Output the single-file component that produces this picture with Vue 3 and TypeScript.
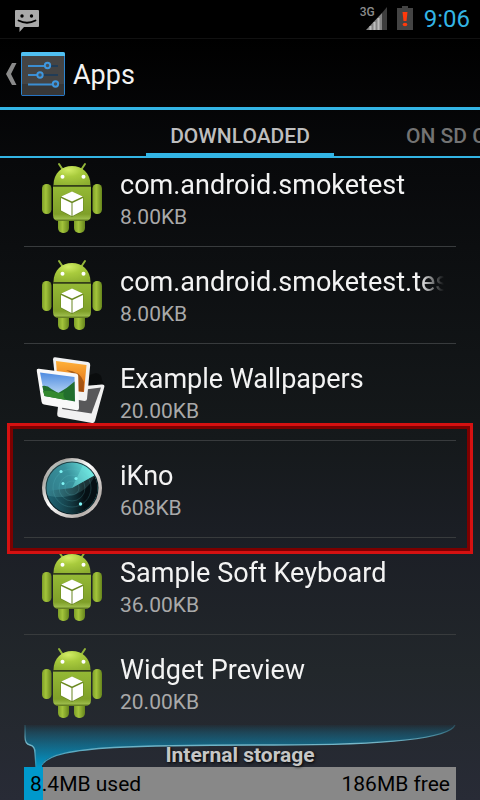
<script setup lang="ts">
type IconKind = 'robot' | 'photos' | 'radar'

interface AppEntry {
  name: string
  size: string
  icon: IconKind
  marked?: boolean
}

const apps: AppEntry[] = [
  { name: 'com.android.smoketest', size: '8.00KB', icon: 'robot' },
  { name: 'com.android.smoketest.tests', size: '8.00KB', icon: 'robot' },
  { name: 'Example Wallpapers', size: '20.00KB', icon: 'photos' },
  { name: 'iKno', size: '608KB', icon: 'radar', marked: true },
  { name: 'Sample Soft Keyboard', size: '36.00KB', icon: 'robot' },
  { name: 'Widget Preview', size: '20.00KB', icon: 'robot' },
]

const storage = { used: 8.4, free: 186 }
const usedShare = `${((storage.used / (storage.used + storage.free)) * 100).toFixed(1)}%`
</script>

<template>
  <div class="screen">
    <svg class="defs" width="0" height="0" aria-hidden="true">
      <defs>
        <linearGradient id="limb" x1="0" x2="1" y1="0" y2="0">
          <stop offset="0" stop-color="#7d9f27" />
          <stop offset=".4" stop-color="#a3c43b" />
          <stop offset="1" stop-color="#66851c" />
        </linearGradient>
        <linearGradient id="torso" x1="0" x2="0" y1="0" y2="1">
          <stop offset="0" stop-color="#94b935" />
          <stop offset=".8" stop-color="#7f9f29" />
          <stop offset=".93" stop-color="#9aba48" />
          <stop offset="1" stop-color="#587219" />
        </linearGradient>
        <radialGradient id="head" cx=".4" cy=".2" r=".9">
          <stop offset="0" stop-color="#d2ed66" />
          <stop offset=".4" stop-color="#a9cb3d" />
          <stop offset="1" stop-color="#8bad2f" />
        </radialGradient>
        <linearGradient id="sky" x1="0" x2="0" y1="0" y2="1">
          <stop offset="0" stop-color="#4e8be0" />
          <stop offset="1" stop-color="#d9edfb" />
        </linearGradient>
        <linearGradient id="sunset" x1="0" x2="0" y1="0" y2="1">
          <stop offset="0" stop-color="#ffb13a" />
          <stop offset="1" stop-color="#dd6510" />
        </linearGradient>
        <linearGradient id="rim" x1="0" x2="1" y1="0" y2="1">
          <stop offset="0" stop-color="#ffffff" />
          <stop offset=".2" stop-color="#aaa49f" />
          <stop offset=".45" stop-color="#ffffff" />
          <stop offset=".8" stop-color="#b5aeaa" />
          <stop offset="1" stop-color="#ffffff" />
        </linearGradient>
        <linearGradient id="scope" x1="10" y1="40" x2="56" y2="16" gradientUnits="userSpaceOnUse">
          <stop offset="0" stop-color="#1f6474" />
          <stop offset=".55" stop-color="#287f8c" />
          <stop offset="1" stop-color="#62e0da" />
        </linearGradient>
        <linearGradient id="scope-dark" x1="12" y1="44" x2="52" y2="42" gradientUnits="userSpaceOnUse">
          <stop offset="0" stop-color="#0a1a20" stop-opacity="0" />
          <stop offset=".9" stop-color="#061014" />
        </linearGradient>
      </defs>
    </svg>

    <div class="status">
      <svg class="talk" width="25" height="24" viewBox="0 0 25 24" aria-hidden="true">
        <path d="M1 1h22q1 0 1 1v15q0 1-1 1H9l-4.500 5V18H1q-1 0-1-1V2q0-1 1-1z" fill="#a9a9a9" />
        <circle cx="7" cy="7" r="1.700" fill="#000" />
        <circle cx="16.500" cy="7" r="1.700" fill="#000" />
        <path d="M3.500 11.500q8.500 4.500 17 0" fill="none" stroke="#000" stroke-width="1.800" stroke-linecap="round" />
      </svg>
      <div class="indicators">
        <span class="network">3G</span>
        <svg class="signal" width="22" height="24" viewBox="0 0 22 24" aria-hidden="true">
          <path d="M0 24L16 7v17z" fill="#858585" />
          <path d="M4.500 20v4M8.500 16v8M12.500 12v12" stroke="#bdbdbd" stroke-width="2" />
          <path d="M16 7l5-6v23h-5z" fill="#3d3d3d" />
        </svg>
        <svg class="battery" width="16" height="24" viewBox="0 0 16 24" aria-hidden="true">
          <path d="M5 0h6v2h5v22H0V2h5z" fill="#444" />
          <path d="M5.500 6h5l-1 9h-3z" fill="#ff3a0c" />
          <ellipse cx="8" cy="18.500" rx="2.300" ry="1.700" fill="#ff3a0c" />
        </svg>
        <time class="clock">9:06</time>
      </div>
    </div>

    <header class="header">
      <button class="up" type="button" aria-label="Back">
        <svg width="11" height="22" viewBox="0 0 11 22" aria-hidden="true">
          <path d="M6 0h4.500L5 11l5.500 11H6L0 11z" fill="#8a8a8a" />
        </svg>
        <svg width="44" height="44" viewBox="0 0 44 44" aria-hidden="true">
          <rect x=".5" y=".5" width="43" height="43" rx="1" fill="#444" stroke="#2c86d0" />
          <rect x="1" y="32" width="42" height="11" fill="#373737" />
          <path d="M0 2q0-2 2-2h40q2 0 2 2v2H0z" fill="#50c0f2" />
          <path d="M1 43.500h42" stroke="#2673c2" />
          <path d="M30 14h7M23 23h14" stroke="#163a5c" stroke-width="1.500" />
          <path d="M7 14h17M7 23h9M7 32.500h25" stroke="#3b8ed2" stroke-width="1.800" />
          <g fill="#46515a" stroke="#3e97df" stroke-width="1.900">
            <circle cx="26.500" cy="13.500" r="2.700" />
            <circle cx="19" cy="23" r="2.700" />
            <circle cx="34.500" cy="32" r="2.700" />
          </g>
        </svg>
      </button>
      <h1 class="title">Apps</h1>
    </header>

    <nav class="tabs">
      <button class="tab current" type="button">DOWNLOADED</button>
      <button class="tab next" type="button">ON SD CARD</button>
    </nav>

    <main class="viewport">
      <ul class="list">
        <li v-for="app in apps" :key="app.name" class="row" :class="{ marked: app.marked }">
          <svg v-if="app.icon === 'robot'" class="icon" viewBox="0 0 72 72" aria-hidden="true">
            <path d="M23 2l4 6M49 2l-4 6" stroke="#93b539" stroke-width="2" stroke-linecap="round" />
            <rect x="22" y="50" width="11" height="21" rx="5" fill="url(#limb)" />
            <rect x="38" y="50" width="11" height="21" rx="5" fill="url(#limb)" />
            <rect x="6" y="22" width="9.500" height="30" rx="4.500" fill="url(#limb)" />
            <rect x="56.500" y="22" width="9.500" height="30" rx="4.500" fill="url(#limb)" />
            <path d="M17 24.500h38V53q0 6-6 6H23q-6 0-6-6z" fill="url(#torso)" />
            <path d="M17.500 23C17.500 11 26 4 36 4s18.500 7 18.500 19z" fill="url(#head)" />
            <path d="M17 23.700h38" stroke="#343f18" stroke-width="1.300" />
            <circle cx="26.500" cy="14.800" r="2" fill="#fff" />
            <circle cx="47.500" cy="14.800" r="2" fill="#fff" />
            <path d="M36 29.500l11.500 5.500v14L36 55l-11.500-6V35z" fill="#526d17" opacity=".55" />
            <path d="M36 29.500L46.800 34.600 36 39.500 25.200 34.600zM25 36l10.500 5v13L25 48.500zM47 36v12.500L36.500 54V41z" fill="#fff" />
          </svg>
          <svg v-else-if="app.icon === 'photos'" class="icon" viewBox="0 0 72 72" aria-hidden="true">
            <path d="M50 20l10-3q6 1 6 7l2 4-18 2z" fill="#000" opacity=".4" />
            <path d="M24 32L66 28.500q3 0 2.300 2.500L59 65q-.8 2.500-3 2L23 61q-2-.5-1.800-3z" fill="#f1f1f1" />
            <path d="M30 36l35-4.500L55.500 57.500 26 53z" fill="#58585a" />
            <path d="M19 1.200L52 6q2.300.5 2.200 3L51 43q-.3 2-2.500 2L21 40 17 3.500q0-2.500 2-2.300z" fill="#f2f2f2" />
            <path d="M20 5l30.500 4L48 36l-26-3z" fill="url(#sunset)" />
            <path d="M30 14q14 1 18 12l-.5 10-7-1L41 20z" fill="#7a3a0c" opacity=".6" />
            <path d="M.8 15q-.6-2.500 2-2.200L40 17.500q2 .3 2.200 2.300L43 52q0 2.500-2.300 2.200L8 48.500q-2-.4-2.400-2.500z" fill="#f9f9f9" />
            <path d="M4 16.500L38.500 21l.5 24.500L8.500 40z" fill="url(#sky)" />
            <path d="M6.300 30q5-1 9 3l7 4q8-4 16.300-11.500L39 45.500 8.500 40z" fill="#226e2e" />
            <path d="M7 35q6-1 12 1t9 0q-2 4 2 8L8.500 40z" fill="#33892f" />
          </svg>
          <svg v-else class="icon" viewBox="0 0 72 72" aria-hidden="true">
            <circle cx="36" cy="35" r="30" fill="url(#rim)" />
            <circle cx="36" cy="35" r="26.500" fill="#081c22" />
            <circle cx="36" cy="35" r="25.500" fill="url(#scope)" />
            <path d="M36 35L58.300 22.600A25.500 25.500 0 1 1 10.700 38z" fill="url(#scope-dark)" />
            <path d="M36 35L58.300 22.600A25.500 25.500 0 0 0 47 12z" fill="#7af5ec" opacity=".35" />
            <path d="M10.800 42A25.500 25.500 0 1 1 58.600 23C54 34 42 44 24 44q-8 0-13.200-2z" fill="#9ff" opacity=".15" />
            <g fill="none" stroke="#62c4ca" stroke-width=".8" opacity=".25">
              <circle cx="36" cy="35" r="7" />
              <circle cx="36" cy="35" r="13" />
              <circle cx="36" cy="35" r="19" />
            </g>
            <g fill="#80f4f4">
              <circle cx="25" cy="18.500" r="1.600" />
              <circle cx="40" cy="25.500" r="1.600" />
              <circle cx="27" cy="30.500" r="1.500" />
              <circle cx="44.500" cy="51" r="1.700" />
            </g>
          </svg>
          <div class="info">
            <div class="name">{{ app.name }}</div>
            <div class="size">{{ app.size }}</div>
          </div>
        </li>
      </ul>
    </main>

    <footer class="storage">
      <svg class="chart" viewBox="0 0 432 43" preserveAspectRatio="none" aria-hidden="true">
        <defs>
          <linearGradient id="glow" x1="0" y1="0" x2="0" y2="43" gradientUnits="userSpaceOnUse">
            <stop offset="0" stop-color="#0099cc" stop-opacity="0" />
            <stop offset=".2" stop-color="#0d8ab5" stop-opacity=".3" />
            <stop offset=".5" stop-color="#0b86b0" stop-opacity=".65" />
            <stop offset="1" stop-color="#0099cc" />
          </linearGradient>
          <linearGradient id="edge" x1="0" y1="0" x2="0" y2="43" gradientUnits="userSpaceOnUse">
            <stop offset="0" stop-color="#3d9fba" stop-opacity=".2" />
            <stop offset=".45" stop-color="#78b7c8" />
            <stop offset="1" stop-color="#2391b5" />
          </linearGradient>
        </defs>
        <path d="M1 1V13Q1 20 6 21Q11 22 11 29L12 43H18V40C24 30 50 26 90 23.500C140 21 200 21 250 21C330 21 424 18 431 1z" fill="url(#glow)" />
        <path d="M1 1V13Q1 20 6 21Q11 22 11 29L12 43M18 41C24 30 50 26 90 23.500C140 21 200 21 250 21C330 21 424 18 431 1" fill="none" stroke="url(#edge)" stroke-width="1.300" />
      </svg>
      <div class="caption">Internal storage</div>
      <div class="bar">
        <div class="used" :style="{ width: usedShare }"></div>
        <span>{{ storage.used }}MB used</span>
        <span>{{ storage.free }}MB free</span>
      </div>
    </footer>
  </div>
</template>

<style>
body {
  margin: 0;
  background: #000;
}
</style>

<style scoped>
.screen {
  display: flex;
  flex-direction: column;
  min-height: 100vh;
  overflow: hidden;
  font-family: Roboto, "Liberation Sans", sans-serif;
  color: #f3f3f3;
  background: linear-gradient(#000 38px, #08090b 160px, #15191b 440px, #1c1f26 550px, #22272b 670px, #282b36);
}
.defs {
  position: absolute;
}
.status {
  display: flex;
  justify-content: space-between;
  align-items: center;
  box-sizing: border-box;
  height: 39px;
  padding: 0 10px 0 15px;
  background: #000;
  border-bottom: 1px solid #111;
}
.talk {
  margin-top: 3px;
}
.indicators {
  display: flex;
  align-items: center;
}
.network {
  align-self: flex-start;
  margin-right: -9px;
  padding-top: 6px;
  font-size: 12px;
  line-height: 14px;
  font-weight: 500;
  color: #8c8c8c;
}
.signal {
  margin-bottom: 2px;
}
.battery {
  margin: 0 11px 2px 9px;
}
.clock {
  font-size: 24px;
  line-height: 40px;
  color: #33b5e5;
}
.header {
  display: flex;
  align-items: center;
  box-sizing: border-box;
  height: 71px;
  padding-left: 6px;
  border-bottom: 3px solid #33b5e5;
}
.up {
  display: flex;
  align-items: center;
  gap: 4px;
  padding: 2px 0 0;
  border: 0;
  background: none;
}
.title {
  margin: 0;
  padding: 3px 0 0 8px;
  font-size: 27px;
  line-height: 32px;
  font-weight: 400;
}
.tabs {
  display: grid;
  grid-template-columns: 1fr 188px 1fr;
  box-sizing: border-box;
  height: 48px;
  border-bottom: 2px solid #33b5e5;
}
.tab {
  padding: 6px 0 0;
  border: 0;
  background: none;
  font: 500 21px/24px Roboto, "Liberation Sans", sans-serif;
  white-space: nowrap;
  color: #737373;
}
.current {
  grid-column: 2;
  border-bottom: 3px solid #33b5e5;
  padding-top: 9px;
  color: #bebebe;
}
.next {
  padding-left: 72px;
  text-align: left;
  overflow: hidden;
}
.viewport {
  flex: 1;
  overflow: hidden;
}
.list {
  margin: -8px 0 0;
  padding: 0 24px;
  list-style: none;
}
.row {
  position: relative;
  display: flex;
  align-items: center;
  gap: 12px;
  height: 96px;
  padding: 0 12px;
  border-bottom: 1px solid #383b3d;
}
.row:last-child {
  border-bottom: 0;
}
.marked::after {
  content: "";
  position: absolute;
  z-index: 1;
  inset: -18px -17px -17px;
  border: 3px solid #d51111;
  box-shadow: inset 0 0 0 3px #7c0000;
}
.icon {
  flex: none;
  width: 72px;
  height: 72px;
}
.info {
  flex: 1;
  min-width: 0;
  padding-top: 3px;
}
.name {
  overflow: hidden;
  font-size: 27px;
  line-height: 36px;
  white-space: nowrap;
  mask-image: linear-gradient(to left, transparent, #000 24px);
}
.size {
  font-size: 21px;
  line-height: 29px;
  color: #a9a9a9;
}
.storage {
  position: relative;
  margin: -7px 24px 0;
}
.chart {
  display: block;
  width: 100%;
  height: 43px;
}
.caption {
  margin-top: -23px;
  position: relative;
  z-index: 1;
  font-size: 21px;
  line-height: 23px;
  font-weight: 700;
  text-align: center;
  color: #c6c6c6;
  text-shadow: 1px 1px 3px #000;
}
.bar {
  position: relative;
  display: flex;
  justify-content: space-between;
  box-sizing: border-box;
  height: 33px;
  padding: 0 6px;
  font-size: 21px;
  line-height: 35px;
  color: #000;
  background: #888;
}
.used {
  position: absolute;
  inset: 0 auto 0 0;
  background: #0099cc;
}
.bar span {
  position: relative;
}
</style>
